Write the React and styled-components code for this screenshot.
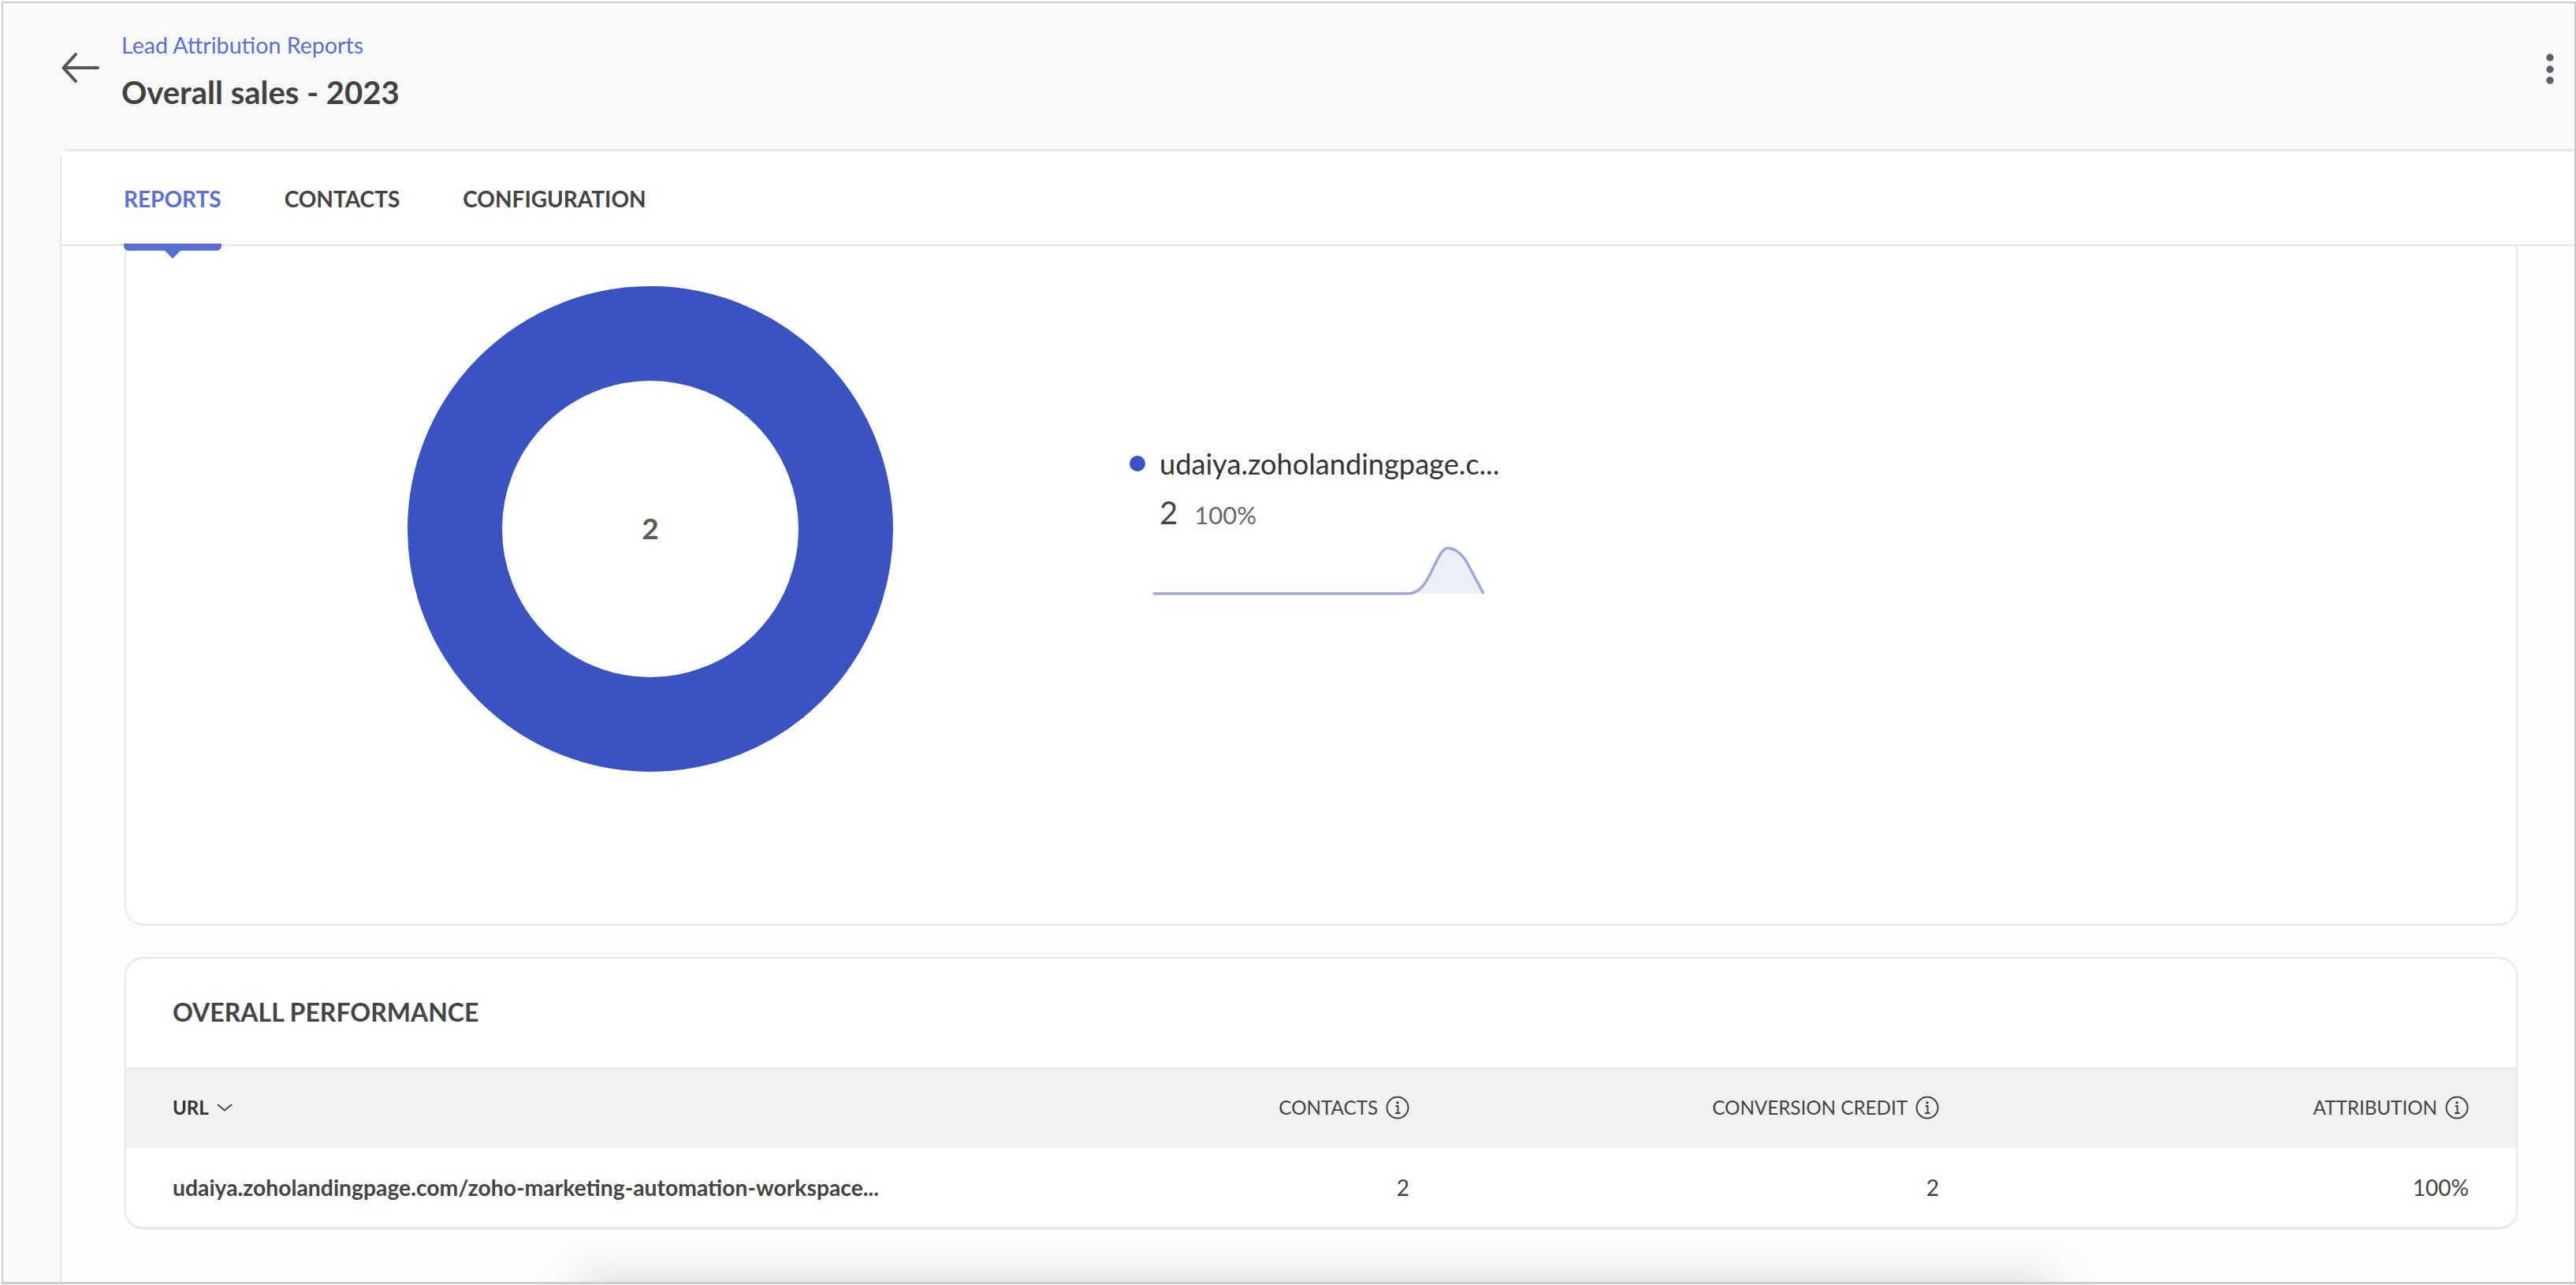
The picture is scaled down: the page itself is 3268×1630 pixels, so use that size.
import React from "react";
import styled, { createGlobalStyle } from "styled-components";

const Global = createGlobalStyle`
  html, body { margin: 0; padding: 0; background: #fff; }
  * { box-sizing: border-box; }
`;

const Frame = styled.div`
  position: relative;
  overflow: hidden;
  display: flex;
  flex-direction: column;
  margin: 2px 0 0 2px;
  height: 1627px;
  width: 3266px;
  border: 2px solid #cbccd0;
  border-bottom-width: 3px;
  background: #f9f9f9;
  font-family: Lato, "Liberation Sans", sans-serif;
  color: #444;
`;

const Header = styled.header`
  height: 185px;
  flex: none;
  display: flex;
  align-items: flex-start;
  padding: 0 16px 0 73px;
`;

const BackButton = styled.div`
  width: 77px;
  padding-top: 63px;
  flex: none;
`;

const TitleBlock = styled.div`
  flex: 1;
  padding-top: 35px;
`;

const Crumb = styled.div`
  font-size: 28.6px;
  line-height: 36px;
  color: #5a6fd6;
`;

const Title = styled.h1`
  margin: 17px 0 0;
  font-size: 40px;
  line-height: 50px;
  font-weight: 700;
  color: #414141;
`;

const MoreIcon = styled.svg`
  margin-top: 64px;
  margin-right: 10px;
  flex: none;
`;

const Main = styled.main`
  flex: 1;
  margin-left: 72px;
  min-height: 0;
  display: flex;
  flex-direction: column;
  background: #fdfdfd;
  border-left: 2px solid #e8e8ea;
  border-top: 3px solid #e8e8e8;
  border-top-left-radius: 12px;
`;

const TabBar = styled.nav`
  height: 120px;
  flex: none;
  display: flex;
  align-items: center;
  gap: 80px;
  padding: 2px 0 0 79px;
  background: #fff;
  border-bottom: 2px solid #e6e6e6;
`;

const Tab = styled.div`
  position: relative;
  font-size: 28px;
  font-weight: 700;
  line-height: 40px;
  color: ${(p) => (p.$active ? "#5a6fd6" : "#434343")};
  ${(p) =>
    p.$active &&
    `
    &::before {
      content: "";
      position: absolute;
      left: 0;
      right: 0;
      top: 77px;
      height: 9px;
      background: #5a6fd6;
      border-radius: 0 0 6px 6px;
    }
    &::after {
      content: "";
      position: absolute;
      left: 50%;
      top: 86px;
      margin-left: -10px;
      border-left: 10px solid transparent;
      border-right: 10px solid transparent;
      border-top: 10px solid #5a6fd6;
    }
  `}
`;

const Content = styled.div`
  flex: 1;
  padding: 0 72px 0 80px;
  display: flex;
  flex-direction: column;
  gap: 40px;
`;

const ChartCard = styled.section`
  height: 862px;
  flex: none;
  background: #fff;
  border: 2px solid #e8e8e8;
  border-top: none;
  border-radius: 0 0 24px 24px;
  padding: 51px 0 0 357px;
  display: flex;
  align-items: flex-start;
`;

const Donut = styled.div`
  position: relative;
  width: 616px;
  height: 616px;
  flex: none;
  display: flex;
  align-items: center;
  justify-content: center;
  padding-bottom: 3px;
  font-size: 37px;
  font-weight: 700;
  color: #5a5a5a;
`;

const DonutSvg = styled.svg`
  position: absolute;
  inset: 0;
`;

const DonutValue = styled.span`
  position: relative;
`;

const Legend = styled.div`
  margin-left: 300px;
  padding-top: 199px;
`;

const LegendName = styled.div`
  display: flex;
  align-items: center;
  gap: 18px;
  font-size: 36.2px;
  line-height: 52px;
  color: #333;
`;

const Dot = styled.span`
  width: 20px;
  height: 20px;
  border-radius: 50%;
  background: #3953c0;
  flex: none;
`;

const LegendStats = styled.div`
  display: flex;
  align-items: baseline;
  gap: 21px;
  margin: 10px 0 0 38px;
  font-size: 40px;
  line-height: 52px;
  color: #444;
`;

const Percent = styled.span`
  font-size: 31px;
  color: #666;
`;

const Spark = styled.svg`
  display: block;
  margin: 14px 0 0 30px;
`;

const TableCard = styled.section`
  height: 346px;
  flex: none;
  background: #fff;
  border: 2px solid #e8e8e8;
  border-bottom-width: 4px;
  border-radius: 24px;
  overflow: hidden;
`;

const CardTitle = styled.h2`
  margin: 0;
  height: 138px;
  display: flex;
  align-items: center;
  padding: 0 0 4px 59px;
  font-size: 32px;
  font-weight: 700;
  color: #444;
`;

const Row = styled.div`
  display: grid;
  grid-template-columns: 1fr 500px 672px 672px;
  align-items: center;
  height: ${(p) => (p.$head ? "102px" : "100px")};
  padding: ${(p) => (p.$head ? "0 60px 3px 59px" : "0 60px 0 59px")};
  background: ${(p) => (p.$head ? "#f1f1f1" : "#fff")};
  border-top: ${(p) => (p.$head ? "2px solid #e8e8e8" : "none")};
`;

const UrlHead = styled.div`
  display: flex;
  align-items: center;
  gap: 10px;
  font-size: 24px;
  font-weight: 700;
  color: #333;
`;

const HeadCell = styled.div`
  display: flex;
  align-items: center;
  justify-content: flex-end;
  gap: 10px;
  font-size: 24.2px;
  color: #444;
`;

const UrlCell = styled.div`
  font-size: 28.3px;
  font-weight: 700;
  color: #444;
  white-space: nowrap;
`;

const NumCell = styled.div`
  text-align: right;
  font-size: 28px;
  color: #444;
`;

const Shadow = styled.div`
  position: absolute;
  left: 730px;
  right: 662px;
  bottom: -60px;
  height: 60px;
  box-shadow: 0 0 60px 0 rgba(0, 0, 0, 0.17);
  background: #e8e8e8;
`;

const Info = () => (
  <svg width="30" height="30" viewBox="0 0 30 30" fill="none">
    <circle cx="15" cy="15" r="13.5" stroke="#444" strokeWidth="2" />
    <circle cx="15" cy="8.8" r="1.8" fill="#444" />
    <path d="M12.5 13h3v9M12 22h6.5" stroke="#444" strokeWidth="2" />
  </svg>
);

export default function App() {
  return (
    <>
      <Global />
      <Frame>
        <Header>
          <BackButton>
            <svg width="50" height="38" viewBox="0 0 50 38" fill="none">
              <path
                d="M47 19H4M19 2 3.5 19 19 36"
                stroke="#555"
                strokeWidth="4"
                strokeLinecap="round"
                strokeLinejoin="round"
              />
            </svg>
          </BackButton>
          <TitleBlock>
            <Crumb>Lead Attribution Reports</Crumb>
            <Title>Overall sales - 2023</Title>
          </TitleBlock>
          <MoreIcon width="10" height="40" viewBox="0 0 10 40" fill="#606066">
            <circle cx="5" cy="5" r="4.7" />
            <circle cx="5" cy="20" r="4.7" />
            <circle cx="5" cy="34" r="4.7" />
          </MoreIcon>
        </Header>
        <Main>
          <TabBar>
            <Tab $active>REPORTS</Tab>
            <Tab>CONTACTS</Tab>
            <Tab>CONFIGURATION</Tab>
          </TabBar>
          <Content>
            <ChartCard>
              <Donut>
                <DonutSvg width="616" height="616" viewBox="0 0 616 616">
                  <circle cx="308" cy="308" r="248" fill="none" stroke="#3953c0" strokeWidth="120" />
                </DonutSvg>
                <DonutValue>2</DonutValue>
              </Donut>
              <Legend>
                <LegendName>
                  <Dot />
                  udaiya.zoholandingpage.c...
                </LegendName>
                <LegendStats>
                  2<Percent>100%</Percent>
                </LegendStats>
                <Spark width="424" height="66" viewBox="0 0 424 66" fill="none">
                  <path d="M323 60C338 60 346 46 352 34 359 19 366 4 371 3 376 1 390 4 400 24L419 60Z" fill="#eceef8" />
                  <path
                    d="M0 60H323C338 60 346 46 352 34 359 19 366 4 371 3 376 1 390 4 400 24L419 60"
                    stroke="#9fa9d8"
                    strokeWidth="3.5"
                  />
                </Spark>
              </Legend>
            </ChartCard>
            <TableCard>
              <CardTitle>OVERALL PERFORMANCE</CardTitle>
              <Row $head>
                <UrlHead>
                  URL
                  <svg width="20" height="10" viewBox="0 0 20 10" fill="none">
                    <path d="M1 1 10 8.5 19 1" stroke="#444" strokeWidth="1.8" />
                  </svg>
                </UrlHead>
                <HeadCell>CONTACTS <Info /></HeadCell>
                <HeadCell>CONVERSION CREDIT <Info /></HeadCell>
                <HeadCell>ATTRIBUTION <Info /></HeadCell>
              </Row>
              <Row>
                <UrlCell>udaiya.zoholandingpage.com/zoho-marketing-automation-workspace...</UrlCell>
                <NumCell>2</NumCell>
                <NumCell>2</NumCell>
                <NumCell>100%</NumCell>
              </Row>
            </TableCard>
          </Content>
        </Main>
        <Shadow />
      </Frame>
    </>
  );
}
